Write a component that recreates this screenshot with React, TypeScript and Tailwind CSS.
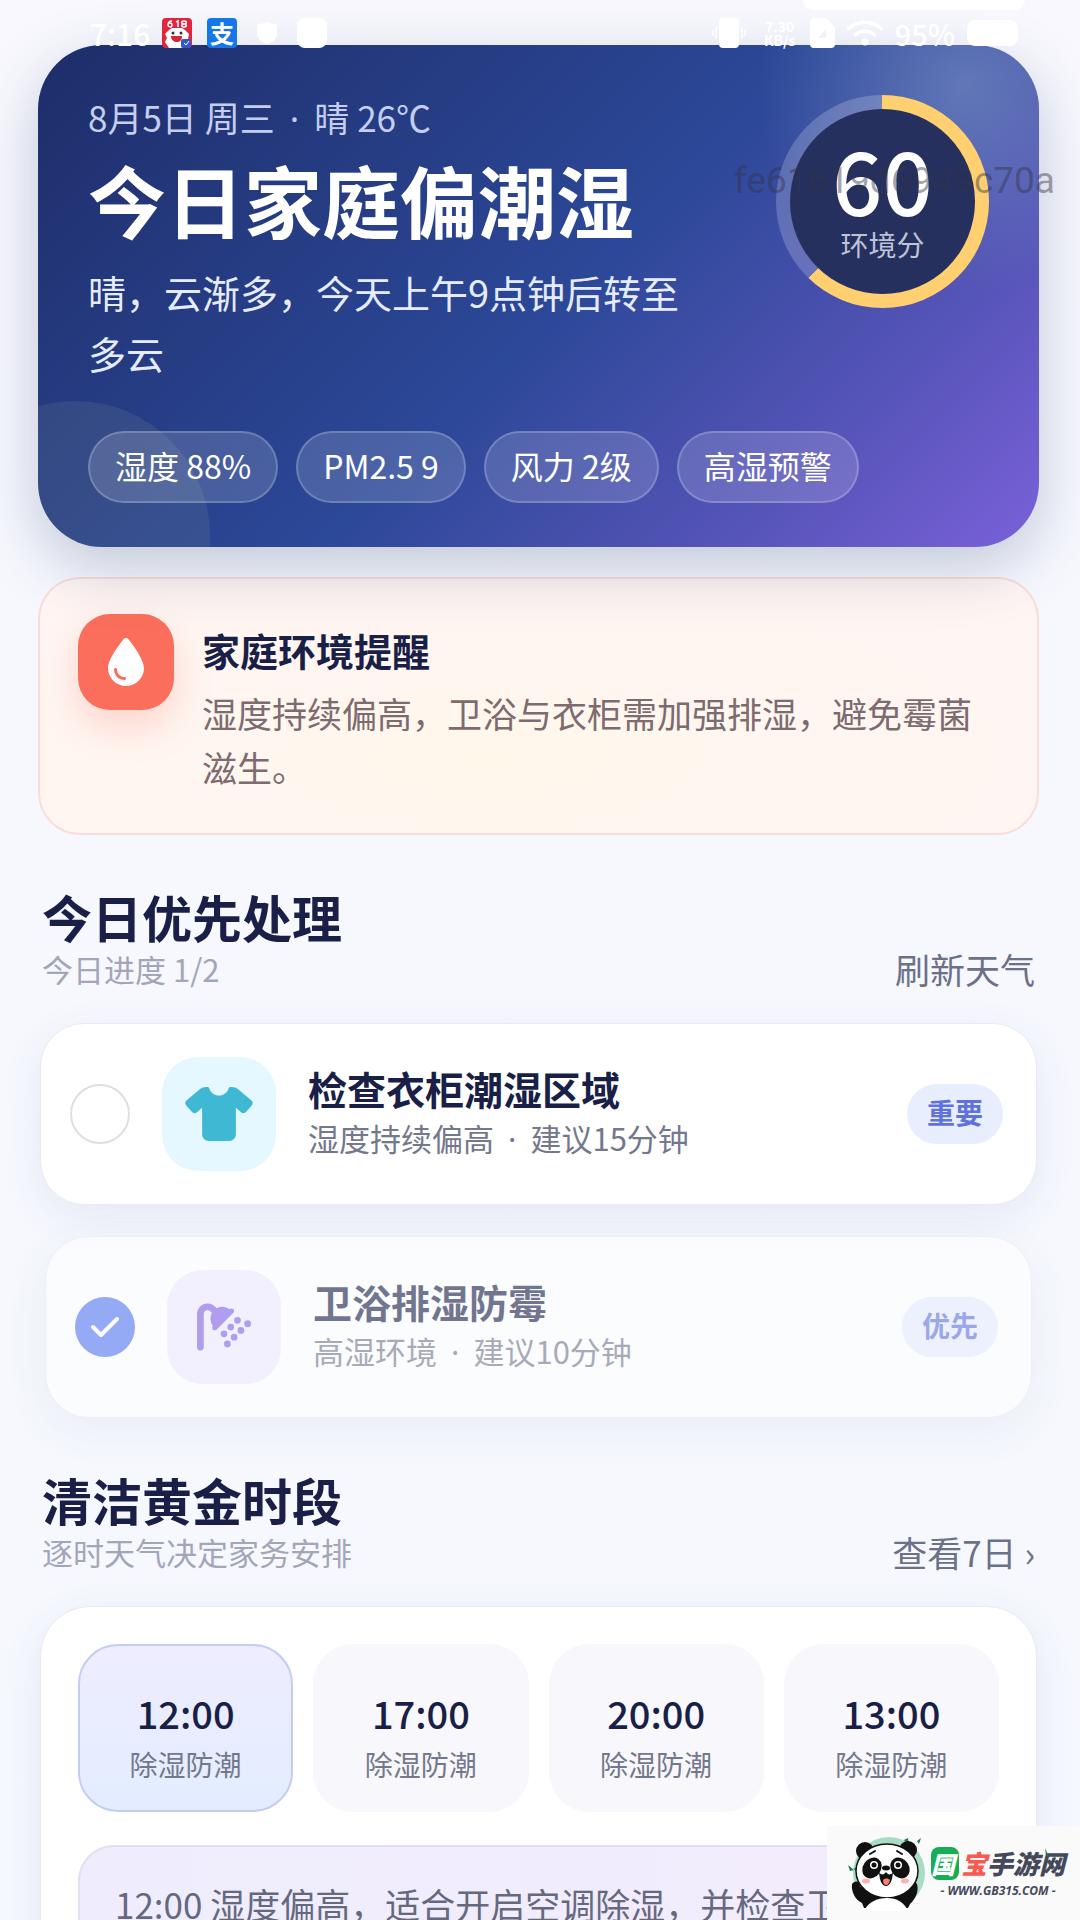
import React, { useState } from "react";
import { FaDroplet, FaShirt, FaShower, FaWifi } from "react-icons/fa6";

const weatherTags = ["湿度 88%", "PM2.5 9", "风力 2级", "高湿预警"];

const initialTasks = [
  {
    id: "wardrobe",
    title: "检查衣柜潮湿区域",
    reason: "湿度持续偏高",
    duration: "建议15分钟",
    level: "重要",
    done: false,
    tile: "bg-[#e6f8ff] text-[#3fb8d4]",
    icon: <FaShirt className="h-[54px] w-[68px]" />,
  },
  {
    id: "bathroom",
    title: "卫浴排湿防霉",
    reason: "高湿环境",
    duration: "建议10分钟",
    level: "优先",
    done: true,
    tile: "bg-[#f0ebff] text-[#8462e4]",
    icon: <FaShower className="h-[54px] w-[54px]" />,
  },
];

const slots = ["12:00", "17:00", "20:00", "13:00"];

const Dot = () => <span className="mx-1.5 font-['Noto_Sans']"> · </span>;

const StatusBar = () => {
  return (
    <div className="pointer-events-none absolute inset-x-0 top-0 z-20 text-white">
      <div className="mr-[55px] ml-auto h-[10px] w-[222px] rounded-b-3xl bg-white" />
      <div className="flex h-[46px] items-center justify-between pr-[62px] pl-[90px]">
        <div className="flex items-center">
          <span className="w-[72px] text-[30px] leading-8 font-medium">7:16</span>
          <svg viewBox="0 0 30 30" className="h-[30px] w-[30px]">
            <rect width="30" height="30" rx="4" fill="#e0263c" />
            <path
              d="M3 16l4-4 3-2h10l3 2 4 4-1 5 1 3-4 6H7l-4-6 2-4z"
              fill="#fff"
            />
            <path
              d="M10 3c-3 0-4 2-4 4s4 3 4 0-4-2-4 0M14 4l2-1v6M22 3c-3 0-3 3 0 3s3 3 0 3-3-3 0-3 3-3 0-3"
              stroke="#fff"
              strokeWidth="1.5"
              fill="none"
            />
            <circle cx="11" cy="15" r="1.5" fill="#333" />
            <circle cx="19" cy="15" r="1.5" fill="#333" />
            <path d="M9 18h11c0 4-2 6-5 6s-6-2-6-6z" fill="#d5263a" />
            <rect x="19" y="21" width="10" height="9" rx="2" fill="#3257c8" />
            <path d="M22 25l2 2 3-4" stroke="#fff" strokeWidth="1" fill="none" />
          </svg>
          <span className="ml-[15px] flex h-[30px] w-[30px] items-center justify-center rounded-sm bg-[#1677e8] text-2xl leading-none font-bold">
            支
          </span>
          <svg viewBox="0 0 20 22" className="ml-5 h-[22px] w-5" fill="#fff">
            <path d="M10 0l10 3v8c0 6-5 10-10 11C5 21 0 17 0 11V3z" />
          </svg>
          <span className="ml-5 h-[30px] w-[30px] rounded-lg bg-white" />
        </div>
        <div className="flex items-center">
          <svg viewBox="0 0 34 30" className="mr-4 h-[30px] w-[34px]" fill="#fff">
            <rect x="7" y="0" width="20" height="30" rx="4" />
            <path
              d="M4 9v12M1 12v6M30 9v12M33 12v6"
              stroke="#fff"
              strokeWidth="1.5"
            />
          </svg>
          <span className="w-9 text-center text-sm leading-[14px] font-bold">
            7.30
            <br />
            KB/s
          </span>
          <svg viewBox="0 0 25 30" className="ml-3 h-[30px] w-[25px]">
            <path
              d="M4 0h12l9 9v17a4 4 0 01-4 4H4a4 4 0 01-4-4V4a4 4 0 014-4z"
              fill="#fff"
            />
            <path d="M8 20l8-9v9z" fill="#f1f1fb" />
          </svg>
          <FaWifi className="ml-3 h-[30px] w-[36px]" />
          <span className="ml-3 text-[29px] leading-8 font-medium">95%</span>
          <span className="ml-3 h-[26px] w-[51px] rounded-lg bg-white" />
        </div>
      </div>
    </div>
  );
};

const ScoreRing = ({ score }) => {
  return (
    <div className="flex h-[213px] w-[213px] shrink-0 items-center justify-center rounded-full bg-[conic-gradient(#ffcf70_0deg_224deg,rgba(255,255,255,0.2)_224deg_360deg)]">
      <div className="flex h-[185px] w-[185px] flex-col items-center justify-center rounded-full bg-[#26305f]">
        <span className="mb-3 text-[88px] leading-[72px] font-medium text-white">
          {score}
        </span>
        <span className="text-[28px] leading-9 text-[#bfc3d8]">环境分</span>
      </div>
    </div>
  );
};

const Hero = () => {
  return (
    <section className="relative z-10 rounded-[64px] bg-[linear-gradient(135deg,#1e2d69_0%,#2c4898_52%,#5654b8_79%,#7a61da_100%)] shadow-[0_20px_60px_rgba(50,75,115,0.28)]">
      <div className="absolute inset-0 overflow-hidden rounded-[64px]">
        <div className="absolute -top-[170px] -right-[136px] h-[420px] w-[420px] rounded-full bg-[radial-gradient(circle,rgba(130,160,200,0.5),rgba(130,160,200,0)_70%)]" />
        <div className="absolute -bottom-[124px] -left-[98px] h-[270px] w-[270px] rounded-full bg-[#8fa09a]/15" />
      </div>
      <div className="relative px-[50px] pt-[50px] pb-11">
        <div className="flex gap-16">
          <div className="flex-1">
            <p className="h-11 text-[35px] leading-[44px] text-[#c5cef0]">
              8月5日 周三
              <Dot />晴 26℃
            </p>
            <h1 className="mt-3 text-[78px] leading-[96px] font-bold text-white">
              今日家庭偏潮湿
            </h1>
            <p className="mt-3.5 text-[38px] leading-[61px] text-[#e6ecff]">
              晴，云渐多，今天上午9点钟后转至多云
            </p>
          </div>
          <ScoreRing score={60} />
        </div>
        <ul className="mt-12 flex gap-[18px]">
          {weatherTags.map((tag) => (
            <li
              key={tag}
              className="rounded-full border-2 border-white/20 bg-white/15 px-[25px] pb-1 text-[32px] leading-[64px] whitespace-nowrap text-white"
            >
              {tag}
            </li>
          ))}
        </ul>
      </div>
      <span className="absolute top-[114px] -right-4 font-[Roboto] text-[37px] leading-[44px] text-[#333344]/45">
        fe61619d6949c70a
      </span>
    </section>
  );
};

const Reminder = () => {
  return (
    <section className="mt-[30px] flex gap-7 rounded-[42px] border-2 border-[#fbdcd8] bg-[radial-gradient(ellipse_at_45%_70%,#fff7ea_0%,#fff6f1_40%,#fff5f3_100%)] px-[38px] pt-[35px] pb-[39px]">
      <div className="flex h-24 w-24 shrink-0 items-center justify-center rounded-[32px] bg-[#fb6e5b] text-white shadow-[0_16px_36px_rgba(251,110,91,0.25)]">
        <FaDroplet className="h-12 w-9" />
      </div>
      <div className="pt-3.5">
        <h2 className="text-[38px] leading-[44px] font-bold text-[#1a1f47]">
          家庭环境提醒
        </h2>
        <p className="mt-3.5 text-[35px] leading-[54px] text-[#7d6b6f]">
          湿度持续偏高，卫浴与衣柜需加强排湿，避免霉菌滋生。
        </p>
      </div>
    </section>
  );
};

const SectionHeader = ({ title, subtitle, children }) => {
  return (
    <header className="mx-1 mt-[50px] flex items-end justify-between pb-0.5">
      <div>
        <h2 className="text-[50px] leading-[62px] font-bold text-[#1a1f47]">
          {title}
        </h2>
        <p className="text-[31px] leading-[44px] text-[#a3a6b8]">{subtitle}</p>
      </div>
      {children}
    </header>
  );
};

const TaskCard = ({ task, onToggle }) => {
  return (
    <li
      className={`flex items-center gap-8 rounded-[44px] border border-[#e9eaf3] bg-white py-[33px] pr-[33px] pl-[29px] shadow-[0_12px_40px_rgba(80,80,160,0.09)] ${
        task.done ? "mx-[5px] opacity-60" : ""
      }`}
    >
      <div className="grid shrink-0 place-items-center">
        <input
          id={task.id}
          type="checkbox"
          checked={task.done}
          onChange={() => onToggle(task.id)}
          className="col-start-1 row-start-1 h-[60px] w-[60px] appearance-none rounded-full border-2 border-[#dedfe4] bg-white checked:border-0 checked:bg-[#5577f0]"
        />
        {task.done && (
          <svg
            viewBox="0 0 28 20"
            className="pointer-events-none col-start-1 row-start-1 h-5 w-7"
            fill="none"
            stroke="#fff"
            strokeWidth="4"
            strokeLinecap="round"
            strokeLinejoin="round"
          >
            <path d="M2 10l8 8L26 2" />
          </svg>
        )}
      </div>
      <div
        className={`flex h-[114px] w-[114px] shrink-0 items-center justify-center rounded-[36px] ${task.tile}`}
      >
        {task.icon}
      </div>
      <label htmlFor={task.id} className="flex-1 pb-1">
        <span className="block text-[39px] leading-[52px] font-bold text-[#1a1f47]">
          {task.title}
        </span>
        <span className="block text-[31px] leading-[48px] text-[#74788c]">
          {task.reason}
          <Dot />
          {task.duration}
        </span>
      </label>
      <span className="rounded-full bg-[#e8eefe] px-5 pb-1 text-[28px] leading-[56px] font-bold text-[#6073dc]">
        {task.level}
      </span>
    </li>
  );
};

const TimeSlots = () => {
  const [active, setActive] = useState("12:00");

  return (
    <section className="mx-0.5 mt-[30px] rounded-[50px] border border-[#e9eaf3] bg-white p-[37px] shadow-[0_12px_40px_rgba(80,80,160,0.09)]">
      <div className="grid grid-cols-4 gap-5">
        {slots.map((slot) => (
          <button
            key={slot}
            onClick={() => setActive(slot)}
            className={`flex h-[168px] flex-col items-center justify-center rounded-[40px] border-2 pt-4 ${
              slot === active
                ? "border-[#c3cdf3] bg-linear-to-b from-[#eeedff] to-[#e3edff]"
                : "border-transparent bg-[#f7f7fc]"
            }`}
          >
            <span className="text-[38px] leading-[56px] font-medium text-[#1a1f47]">
              {slot}
            </span>
            <span className="text-[28px] leading-[46px] text-[#74788c]">
              除湿防潮
            </span>
          </button>
        ))}
      </div>
      <p className="mt-[33px] rounded-[36px] border-2 border-[#e3def3] bg-linear-to-r from-[#efedfd] to-[#f3ecfd] px-[35px] py-[30px] text-[35px] leading-[54px] text-[#66697e]">
        12:00 湿度偏高，适合开启空调除湿，并检查卫浴
      </p>
    </section>
  );
};

const SiteBadge = () => {
  return (
    <div className="absolute right-0 bottom-0 z-30 flex h-[94px] w-[253px] items-center gap-1 bg-[#fafafa] pl-5">
      <svg viewBox="0 0 80 76" className="h-[76px] w-[80px] shrink-0">
        <circle cx="42" cy="38" r="36" fill="#a9dcc5" />
        <path d="M57 5l5 6-1-8zM70 6l4-3-2 6zM1 30l6 5-4 1zM7 34l4-4-2 6z" fill="#1f7a50" />
        <path d="M5 49c3-4 8-3 8 2l5 4h41l3-3c-1-5 5-8 8-3 2 6-1 15-7 20l-2 4H17l-2-5C8 65 4 56 5 49z" fill="#111" />
        <circle cx="18" cy="16" r="9" fill="#111" />
        <circle cx="61" cy="15" r="9" fill="#111" />
        <ellipse cx="40" cy="36" rx="31" ry="27" fill="#fff" stroke="#111" strokeWidth="1.5" />
        <ellipse cx="25" cy="33" rx="9" ry="11" fill="#111" transform="rotate(35 25 33)" />
        <ellipse cx="53" cy="33" rx="9" ry="11" fill="#111" transform="rotate(-35 53 33)" />
        <circle cx="27" cy="30" r="4" fill="#fff" />
        <circle cx="51" cy="30" r="4" fill="#fff" />
        <circle cx="27" cy="30" r="2.5" fill="#111" />
        <circle cx="51" cy="30" r="2.5" fill="#111" />
        <path d="M23 19l5-3M50 16l5 3" stroke="#111" strokeWidth="2" strokeLinecap="round" />
        <ellipse cx="39" cy="33" rx="4" ry="2.5" fill="#111" />
        <path d="M32 38c3 2 5 2 7-1 2 3 4 3 7 1-1 8-3 13-7 13s-6-5-7-13z" fill="#111" />
        <path d="M36 45c2-2 5-2 7 0-1 4-2 5-4 5s-3-2-3-5z" fill="#f2827a" />
        <ellipse cx="19" cy="46" rx="4" ry="2.5" fill="#f8b4ac" />
        <ellipse cx="58" cy="46" rx="4" ry="2.5" fill="#f8b4ac" />
        <path d="M17 76c4-9 13-13 23-13s17 4 21 13z" fill="#fff" />
      </svg>
      <div className="flex flex-col items-center">
        <p className="flex items-center text-[26px] leading-9 font-black text-[#44485a] italic">
          <span className="mr-0.5 rounded-lg bg-[#16ad55] pr-1 text-2xl leading-[33px] text-white">
            国
          </span>
          <span className="text-[#f9594f]">宝</span>
          <span>手游网</span>
        </p>
        <p className="font-['Open_Sans'] text-xs leading-5 font-bold text-[#44485a] italic">
          - WWW.GB315.COM -
        </p>
      </div>
      <svg viewBox="0 0 16 12" className="absolute top-[22px] right-5 h-3 w-4" fill="#1f7a50">
        <path d="M1 0l4 9-3-2zM9 7l3 3-1 1zM15 6l-2 4 1-4z" />
      </svg>
    </div>
  );
};

const App = () => {
  const [tasks, setTasks] = useState(initialTasks);

  const toggleTask = (id) => {
    setTasks((prev) =>
      prev.map((task) => (task.id === id ? { ...task, done: !task.done } : task)),
    );
  };

  return (
    <div className="relative h-screen overflow-hidden bg-linear-to-b from-[#f8f8fe] to-[#f5f8fe] font-['Noto_Sans_CJK_SC',sans-serif]">
      <StatusBar />
      <main className="pt-[45px] pr-[41px] pl-[38px]">
        <Hero />
        <Reminder />

        <SectionHeader title="今日优先处理" subtitle="今日进度 1/2">
          <button className="text-[35px] leading-[44px] text-[#6c7188]">
            刷新天气
          </button>
        </SectionHeader>
        <ul className="mx-0.5 mt-[30px] flex flex-col gap-[31px]">
          {tasks.map((task) => (
            <TaskCard key={task.id} task={task} onToggle={toggleTask} />
          ))}
        </ul>

        <SectionHeader title="清洁黄金时段" subtitle="逐时天气决定家务安排">
          <a href="#week" className="text-[35px] leading-[44px] text-[#6c7188]">
            查看7日 ›
          </a>
        </SectionHeader>
        <TimeSlots />
      </main>
      <SiteBadge />
    </div>
  );
};

export default App;
